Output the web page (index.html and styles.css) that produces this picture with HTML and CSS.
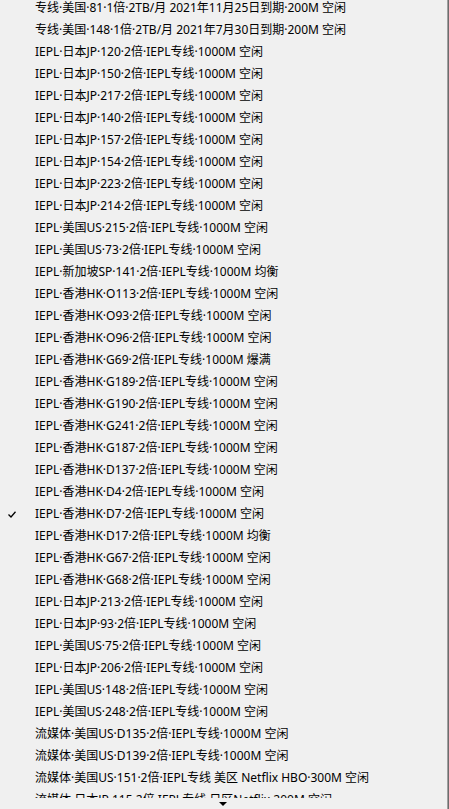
FILE: index.html
```html
<!DOCTYPE html>
<html lang="zh-CN">
<head>
<meta charset="utf-8">
<link rel="stylesheet" href="styles.css">
</head>
<body>
<div class="menu">
  <div class="viewport">
    <ul class="items">
      <li class="item">专线·美国·81·1倍·2TB/月 2021年11月25日到期·200M 空闲</li>
      <li class="item">专线·美国·148·1倍·2TB/月 2021年7月30日到期·200M 空闲</li>
      <li class="item">IEPL·日本JP·120·2倍·IEPL专线·1000M 空闲</li>
      <li class="item">IEPL·日本JP·150·2倍·IEPL专线·1000M 空闲</li>
      <li class="item">IEPL·日本JP·217·2倍·IEPL专线·1000M 空闲</li>
      <li class="item">IEPL·日本JP·140·2倍·IEPL专线·1000M 空闲</li>
      <li class="item">IEPL·日本JP·157·2倍·IEPL专线·1000M 空闲</li>
      <li class="item">IEPL·日本JP·154·2倍·IEPL专线·1000M 空闲</li>
      <li class="item">IEPL·日本JP·223·2倍·IEPL专线·1000M 空闲</li>
      <li class="item">IEPL·日本JP·214·2倍·IEPL专线·1000M 空闲</li>
      <li class="item">IEPL·美国US·215·2倍·IEPL专线·1000M 空闲</li>
      <li class="item">IEPL·美国US·73·2倍·IEPL专线·1000M 空闲</li>
      <li class="item">IEPL·新加坡SP·141·2倍·IEPL专线·1000M 均衡</li>
      <li class="item">IEPL·香港HK·O113·2倍·IEPL专线·1000M 空闲</li>
      <li class="item">IEPL·香港HK·O93·2倍·IEPL专线·1000M 空闲</li>
      <li class="item">IEPL·香港HK·O96·2倍·IEPL专线·1000M 空闲</li>
      <li class="item">IEPL·香港HK·G69·2倍·IEPL专线·1000M 爆满</li>
      <li class="item">IEPL·香港HK·G189·2倍·IEPL专线·1000M 空闲</li>
      <li class="item">IEPL·香港HK·G190·2倍·IEPL专线·1000M 空闲</li>
      <li class="item">IEPL·香港HK·G241·2倍·IEPL专线·1000M 空闲</li>
      <li class="item">IEPL·香港HK·G187·2倍·IEPL专线·1000M 空闲</li>
      <li class="item">IEPL·香港HK·D137·2倍·IEPL专线·1000M 空闲</li>
      <li class="item">IEPL·香港HK·D4·2倍·IEPL专线·1000M 空闲</li>
      <li class="item checked"><svg class="check" width="8" height="7" viewBox="0 0 8 7"><path d="M0.5 3.5 L3 6 L7.5 0.8" fill="none" stroke="#000" stroke-width="1.3"/></svg>IEPL·香港HK·D7·2倍·IEPL专线·1000M 空闲</li>
      <li class="item">IEPL·香港HK·D17·2倍·IEPL专线·1000M 均衡</li>
      <li class="item">IEPL·香港HK·G67·2倍·IEPL专线·1000M 空闲</li>
      <li class="item">IEPL·香港HK·G68·2倍·IEPL专线·1000M 空闲</li>
      <li class="item">IEPL·日本JP·213·2倍·IEPL专线·1000M 空闲</li>
      <li class="item">IEPL·日本JP·93·2倍·IEPL专线·1000M 空闲</li>
      <li class="item">IEPL·美国US·75·2倍·IEPL专线·1000M 空闲</li>
      <li class="item">IEPL·日本JP·206·2倍·IEPL专线·1000M 空闲</li>
      <li class="item">IEPL·美国US·148·2倍·IEPL专线·1000M 空闲</li>
      <li class="item">IEPL·美国US·248·2倍·IEPL专线·1000M 空闲</li>
      <li class="item">流媒体·美国US·D135·2倍·IEPL专线·1000M 空闲</li>
      <li class="item">流媒体·美国US·D139·2倍·IEPL专线·1000M 空闲</li>
      <li class="item">流媒体·美国US·151·2倍·IEPL专线 美区 Netflix HBO·300M 空闲</li>
      <li class="item">流媒体·日本JP·115·2倍·IEPL专线 日区Netflix·200M 空闲</li>
    </ul>
  </div>
  <div class="scroll-down"><span class="arrow"></span></div>
</div>
</body>
</html>
```

FILE: styles.css
```css
html, body {
  margin: 0;
  padding: 0;
  background: #f0f0f0;
}
.menu {
  width: 447px;
  height: 809px;
  border-right: 1px solid #a0a0a0;
  box-shadow: 1px 0 0 #6d6d6d;
  display: flex;
  flex-direction: column;
  background: #f0f0f0;
  font-family: "Noto Sans", "Noto Sans CJK SC", sans-serif;
  font-size: 12px;
  color: #000;
}
.viewport {
  height: 798px;
  overflow: hidden;
}
.items {
  list-style: none;
  margin: -3px 0 0 0;
  padding: 0;
}
.item {
  position: relative;
  height: 22px;
  line-height: 22px;
  padding-left: 35px;
  white-space: nowrap;
}
.check {
  position: absolute;
  left: 8px;
  top: 8px;
}
.scroll-down {
  flex: 1;
  display: flex;
  justify-content: center;
  padding-top: 4px;
}
.arrow {
  width: 0;
  height: 0;
  margin-left: -2px;
  border-left: 4px solid transparent;
  border-right: 4px solid transparent;
  border-top: 4px solid #000;
}
```
